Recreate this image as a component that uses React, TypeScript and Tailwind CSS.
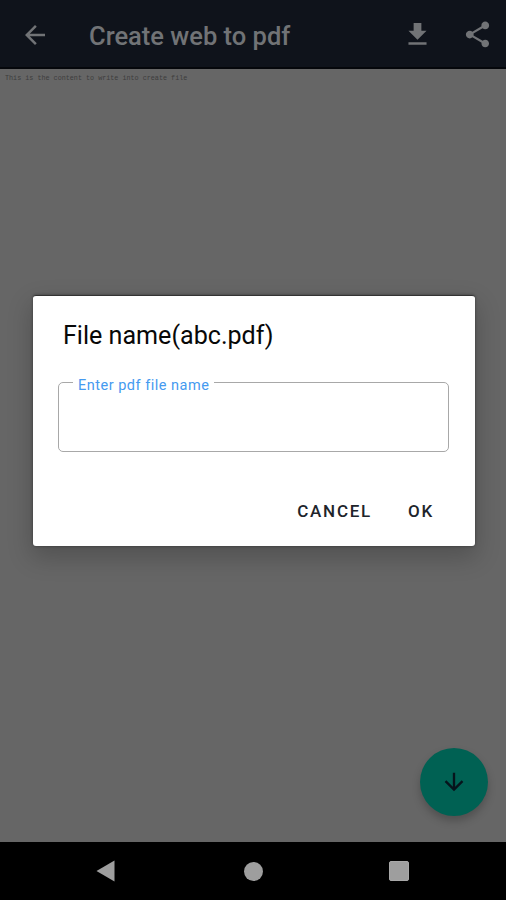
import { useState } from "react";

const ICONS = {
  back: "M20 11H7.83l5.59-5.59L12 4l-8 8 8 8 1.41-1.41L7.83 13H20v-2z",
  download: "M19 9h-4V3H9v6H5l7 7 7-7zM5 18v2h14v-2H5z",
  share:
    "M18 16.08c-.76 0-1.44.3-1.96.77L8.91 12.7c.05-.23.09-.46.09-.7s-.04-.47-.09-.7l7.05-4.11c.54.5 1.25.81 2.04.81 1.66 0 3-1.34 3-3s-1.34-3-3-3-3 1.34-3 3c0 .24.04.47.09.7L8.04 9.81C7.5 9.31 6.79 9 6 9c-1.66 0-3 1.34-3 3s1.34 3 3 3c.79 0 1.5-.31 2.04-.81l7.12 4.16c-.05.21-.08.43-.08.65 0 1.61 1.31 2.92 2.92 2.92s2.92-1.31 2.92-2.92-1.31-2.92-2.92-2.92z",
  down: "M20 12l-1.41-1.41L13 16.17V4h-2v12.17l-5.58-5.59L4 12l8 8 8-8z",
};

function Icon({ name, className }: { name: keyof typeof ICONS; className?: string }) {
  return (
    <svg viewBox="0 0 24 24" fill="currentColor" className={className}>
      <path d={ICONS[name]} />
    </svg>
  );
}

function AppBar() {
  return (
    <header className="flex h-[69px] shrink-0 items-center border-b-2 border-[#05070b] bg-[#0f131b] pl-5 pr-[13px] pt-[2px] text-[#717376]">
      <button aria-label="Back">
        <Icon name="back" className="size-[30px]" />
      </button>
      <h1 className="ml-[39px] mt-[3px] flex-1 whitespace-nowrap text-[25.5px] font-medium">Create web to pdf</h1>
      <button aria-label="Download">
        <Icon name="download" className="size-[31px]" />
      </button>
      <button aria-label="Share" className="ml-[29px]">
        <Icon name="share" className="size-[31px]" />
      </button>
    </header>
  );
}

function FileNameDialog() {
  const [fileName, setFileName] = useState("");

  return (
    <div
      role="dialog"
      className="absolute left-[33px] top-[295px] flex h-[251px] w-[442px] flex-col rounded-[3px] border-t border-[#333] bg-white px-[25px] shadow-[0_10px_24px_2px_rgba(0,0,0,0.2),0_0_3px_rgba(0,0,0,0.4)]"
    >
      <h2 className="ml-[5px] mt-[24px] whitespace-nowrap text-[25.1px] leading-8 text-[#080808]">File name(abc.pdf)</h2>
      <fieldset className="mt-[21px] h-[79px] w-[391px] rounded-[5px] border-[1.5px] border-[#a8a8a8] pl-[14px]">
        <legend className="px-[5px] text-[14.5px] leading-[18px] tracking-[0.5px] text-[#459af0]">
          <span className="relative top-[4px]">Enter pdf file name</span>
        </legend>
        <input
          aria-label="Enter pdf file name"
          className="h-10 w-[360px] outline-none"
          value={fileName}
          onChange={(e) => setFileName(e.target.value)}
        />
      </fieldset>
      <div className="mr-4 mt-[47px] flex justify-end gap-9 text-[17px] font-medium leading-6 tracking-[1.75px] text-[#20242b]">
        <button onClick={() => setFileName("")}>CANCEL</button>
        <button>OK</button>
      </div>
    </div>
  );
}

function NavBar() {
  return (
    <nav className="flex h-[58px] shrink-0 items-center bg-black pl-[96px] text-[#9e9e9e]">
      <svg viewBox="0 0 19 22" className="h-[22px] w-[19px]" fill="currentColor">
        <path d="M18.5 0.5v21L0.5 11z" />
      </svg>
      <span className="ml-[129px] size-[19px] rounded-full bg-[#9e9e9e]" />
      <span className="ml-[126px] size-[20px] rounded-[2px] border border-[#a8a8a8] bg-[#9e9e9e]" />
    </nav>
  );
}

export default function App() {
  return (
    <div className="relative flex h-[900px] w-[506px] flex-col overflow-hidden bg-[#666] font-['Roboto',sans-serif]">
      <AppBar />
      <main className="flex-1 px-[5px] pt-[3px]">
        <p className="whitespace-nowrap font-['Liberation_Mono',monospace] text-[6.75px] leading-[12px] text-[#3d3d3d]">
          This is the content to write into create file
        </p>
      </main>
      <NavBar />

      <button
        aria-label="Scroll down"
        className="absolute left-[420px] top-[748px] flex size-[68px] items-center justify-center rounded-full bg-[#006153] text-[#06141c] shadow-[0_5px_9px_rgba(0,0,0,0.22)]"
      >
        <Icon name="down" className="size-[28px]" />
      </button>
      <FileNameDialog />
    </div>
  );
}
